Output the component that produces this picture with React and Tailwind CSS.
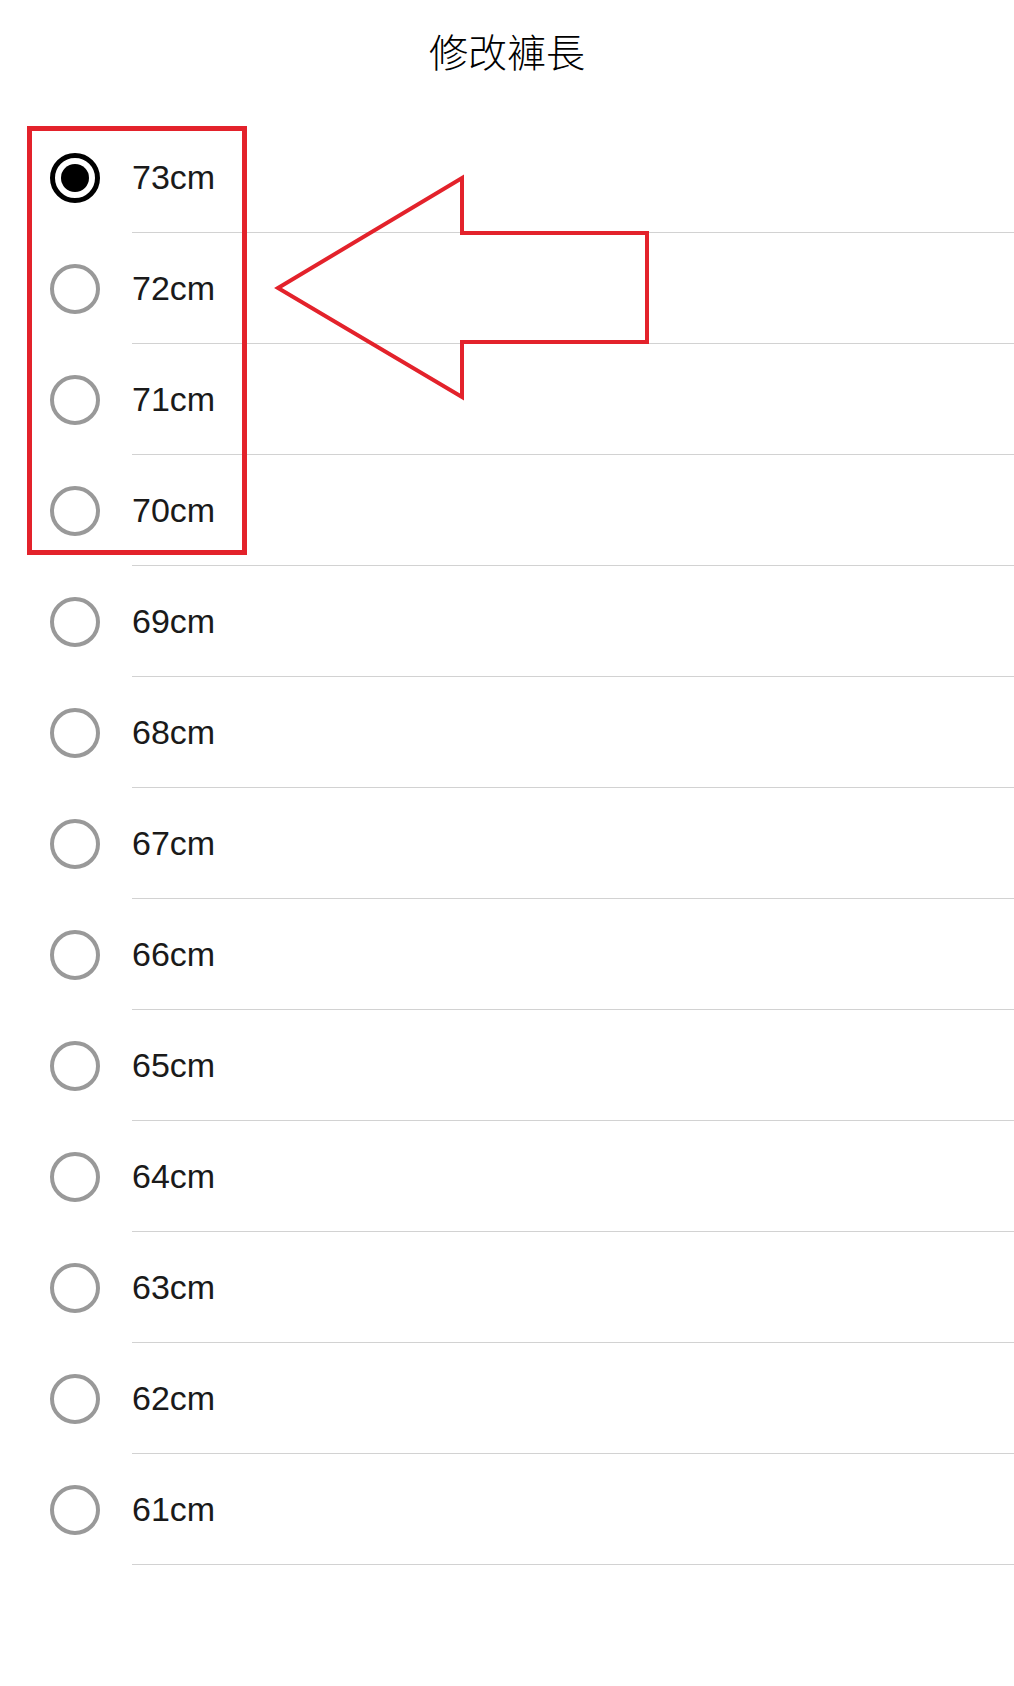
import { useState } from "react";

const sizes = [73, 72, 71, 70, 69, 68, 67, 66, 65, 64, 63, 62, 61];

function Radio({ checked }) {
  if (checked) {
    return (
      <span className="flex h-[50px] w-[50px] shrink-0 items-center justify-center rounded-full border-[5px] border-black">
        <span className="h-[28px] w-[28px] rounded-full bg-black" />
      </span>
    );
  }
  return <span className="h-[50px] w-[50px] shrink-0 rounded-full border-[4px] border-[#999999]" />;
}

export default function App() {
  const [selected, setSelected] = useState(73);

  return (
    <div className="relative min-h-[1686px] w-full bg-white" style={{ fontFamily: '"Liberation Sans", Arial, sans-serif' }}>
      {/* Header */}
      <div className="flex h-[122px] items-start justify-center pt-[24px]">
        <h1
          className="text-[39px] font-light leading-[52px] text-black"
          style={{ fontFamily: '"Noto Sans CJK TC", "Noto Sans CJK SC", sans-serif' }}
        >
          修改褲長
        </h1>
      </div>

      {/* Options */}
      <ul>
        {sizes.map((s) => (
          <li
            key={s}
            className="flex h-[111px] cursor-pointer items-stretch pl-[50px]"
            onClick={() => setSelected(s)}
          >
            <div className="flex items-center">
              <Radio checked={selected === s} />
            </div>
            <div className="ml-[32px] flex flex-1 items-center border-b border-[#d2d2d2]">
              <span className="text-[34px] leading-none text-[#1a1a1a]">{s}cm</span>
            </div>
          </li>
        ))}
      </ul>

      {/* Annotation: red box */}
      <div className="pointer-events-none absolute left-[27px] top-[126px] h-[429px] w-[220px] border-[5px] border-[#e3222b]" />

      {/* Annotation: arrow */}
      <svg
        className="pointer-events-none absolute left-0 top-0"
        width="1014"
        height="420"
        viewBox="0 0 1014 420"
      >
        <polygon
          points="278,288 462,178 462,233 647,233 647,342 462,342 462,397"
          fill="none"
          stroke="#e3222b"
          strokeWidth="4"
          strokeLinejoin="miter"
        />
      </svg>
    </div>
  );
}
